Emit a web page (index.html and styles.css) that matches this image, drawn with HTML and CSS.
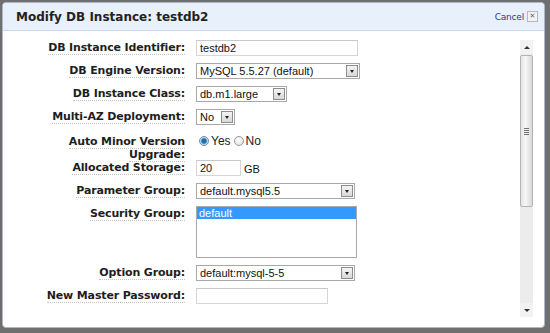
FILE: index.html
```html
<!DOCTYPE html>
<html lang="en">
<head>
  <meta charset="UTF-8" />
  <title>Modify DB Instance</title>
  <link rel="stylesheet" href="styles.css">
</head>
<body>
  <div class="dialog">
    <div class="dialog-header">
      <h1>Modify DB Instance: testdb2</h1>
      <div class="header-actions">
        <a class="cancel" href="#">Cancel</a>
        <span class="close-box">&#x2715;</span>
      </div>
    </div>

    <div class="dialog-body">
      <div class="form">
        <div class="row">
          <div class="label"><span>DB Instance Identifier:</span></div>
          <div class="field"><div class="text-input w-id">testdb2</div></div>
        </div>
        <div class="row">
          <div class="label"><span>DB Engine Version:</span></div>
          <div class="field">
            <div class="select w-engine"><span class="value">MySQL 5.5.27 (default)</span><span class="arrow"></span></div>
          </div>
        </div>
        <div class="row">
          <div class="label"><span>DB Instance Class:</span></div>
          <div class="field">
            <div class="select w-class"><span class="value">db.m1.large</span><span class="arrow"></span></div>
          </div>
        </div>
        <div class="row row-loose">
          <div class="label"><span>Multi-AZ Deployment:</span></div>
          <div class="field">
            <div class="select w-az"><span class="value">No</span><span class="arrow"></span></div>
          </div>
        </div>
        <div class="row row-tight">
          <div class="label label-two"><span>Auto Minor Version</span><br><span>Upgrade:</span></div>
          <div class="field radios">
            <span class="radio checked"></span><span class="radio-text">Yes</span>
            <span class="radio"></span><span class="radio-text">No</span>
          </div>
        </div>
        <div class="row">
          <div class="label"><span>Allocated Storage:</span></div>
          <div class="field">
            <div class="text-input w-storage">20</div><span class="unit">GB</span>
          </div>
        </div>
        <div class="row">
          <div class="label"><span>Parameter Group:</span></div>
          <div class="field">
            <div class="select w-param"><span class="value">default.mysql5.5</span><span class="arrow"></span></div>
          </div>
        </div>
        <div class="row">
          <div class="label"><span>Security Group:</span></div>
          <div class="field">
            <div class="listbox"><div class="list-item selected">default</div></div>
          </div>
        </div>
        <div class="row">
          <div class="label"><span>Option Group:</span></div>
          <div class="field">
            <div class="select w-param"><span class="value">default:mysql-5-5</span><span class="arrow"></span></div>
          </div>
        </div>
        <div class="row">
          <div class="label"><span>New Master Password:</span></div>
          <div class="field"><div class="text-input w-pass"></div></div>
        </div>
      </div>

      <div class="scrollbar">
        <div class="sb-btn"><span class="tri-up"></span></div>
        <div class="sb-thumb"><span class="grip"></span></div>
        <div class="sb-track"></div>
        <div class="sb-btn"><span class="tri-down"></span></div>
      </div>
    </div>
  </div>
</body>
</html>
```

FILE: styles.css
```css
* { box-sizing: border-box; }
html, body {
  margin: 0;
  padding: 0;
  height: 100%;
}
body {
  background: #6f6f6f;
  padding: 2px 5px 5px 2px;
  font-family: 'DejaVu Sans', Verdana, sans-serif;
  overflow: hidden;
}
.dialog {
  height: 326px;
  background: #fff;
  border: 1px solid #a9b8cc;
  border-radius: 4px;
  overflow: hidden;
  display: flex;
  flex-direction: column;
}
.dialog-header {
  height: 28px;
  background: #e8f0fb;
  border-bottom: 1px solid #c8d8ee;
  display: flex;
  align-items: center;
  justify-content: space-between;
  padding: 0 6px 0 13px;
  flex-shrink: 0;
}
.dialog-header h1 {
  margin: 0;
  font-size: 12px;
  font-weight: bold;
  color: #222;
}
.header-actions {
  display: flex;
  align-items: center;
  gap: 3px;
}
.cancel {
  font-family: 'DejaVu Sans', Verdana, sans-serif;
  font-size: 9px;
  letter-spacing: -0.2px;
  color: #2a3b98;
  text-decoration: none;
}
.close-box {
  width: 11px;
  height: 11px;
  border: 1px solid #b8b8b8;
  background: #f2f2f2;
  color: #666;
  font-size: 7px;
  line-height: 9px;
  text-align: center;
}
.dialog-body {
  flex: 1;
  display: flex;
  overflow: hidden;
}
.form {
  flex: 1;
  padding-top: 9px;
}
.row {
  display: flex;
  align-items: flex-start;
  margin-bottom: 7px;
}
.row-loose {
  margin-bottom: 10px;
}
.row-tight {
  margin-bottom: -1px;
}
.label {
  width: 182px;
  flex-shrink: 0;
  text-align: right;
  font-size: 11px;
  font-weight: bold;
  letter-spacing: -0.15px;
  color: #1e1e1e;
  line-height: 16px;
}
.label span {
  border-bottom: 1px dotted #c4c4c4;
}
.label-two {
  line-height: 13px;
}
.field {
  margin-left: 11px;
  display: flex;
  align-items: center;
  font-family: 'Liberation Sans', Arial, sans-serif;
  font-size: 11px;
  color: #111;
}
.text-input {
  height: 16px;
  border: 1px solid #d6d6d6;
  border-top-color: #c8c8c8;
  background: #fff;
  padding: 0 3px;
  line-height: 14px;
}
.w-id { width: 162px; }
.w-storage { width: 45px; }
.w-pass { width: 132px; }
.unit {
  margin-left: 3px;
  margin-top: 2px;
}
.select {
  height: 16px;
  border: 1px solid #a8a8a8;
  background: #fff;
  display: flex;
  align-items: center;
  justify-content: space-between;
  padding: 0 1px 0 3px;
}
.select .value {
  line-height: 14px;
}
.select .arrow {
  width: 12px;
  height: 12px;
  border: 1px solid #8c8c8c;
  background: linear-gradient(#f4f4f4, #d8d8d8);
  position: relative;
}
.select .arrow::after {
  content: "";
  position: absolute;
  left: 3px;
  top: 4px;
  border-left: 2px solid transparent;
  border-right: 2px solid transparent;
  border-top: 3px solid #222;
}
.w-engine { width: 164px; }
.w-class { width: 91px; }
.w-az { width: 39px; }
.w-param { width: 159px; }
.radios {
  height: 16px;
  margin-top: -2px;
}
.radio {
  width: 10px;
  height: 10px;
  border-radius: 50%;
  border: 1px solid #9a9a9a;
  background: radial-gradient(circle at 40% 35%, #fff, #dcdcdc);
  margin: 0 2px 0 3px;
}
.radio.checked {
  background: radial-gradient(circle, #1d6fa8 0 2px, #7fb2d6 3px, #e6eef5 4px);
  border-color: #6a8fae;
}
.radio-text {
  font-size: 12px;
  color: #222;
}
.listbox {
  width: 161px;
  height: 52px;
  border: 1px solid #a8a8a8;
  background: #fff;
}
.list-item {
  padding: 0 2px;
  line-height: 12px;
}
.list-item.selected {
  background: #3399ff;
  color: #fff;
}
.scrollbar {
  width: 13px;
  margin: 9px 11px 10px 0;
  display: flex;
  flex-direction: column;
  background: #ececec;
}
.sb-btn {
  height: 14px;
  background: #f2f2f2;
  display: flex;
  align-items: center;
  justify-content: center;
}
.tri-up {
  border-left: 3px solid transparent;
  border-right: 3px solid transparent;
  border-bottom: 3px solid #333;
}
.tri-down {
  border-left: 3px solid transparent;
  border-right: 3px solid transparent;
  border-top: 3px solid #333;
}
.sb-thumb {
  height: 152px;
  margin: 1px 0;
  border: 1px solid #b4b4b4;
  border-radius: 2px;
  background: linear-gradient(to right, #e4e4e4, #f7f7f7 40%, #d8d8d8);
  display: flex;
  align-items: center;
  justify-content: center;
}
.grip {
  width: 5px;
  height: 7px;
  background: repeating-linear-gradient(#6f6f6f 0 1px, transparent 1px 2px);
}
.sb-track {
  flex: 1;
}
```
